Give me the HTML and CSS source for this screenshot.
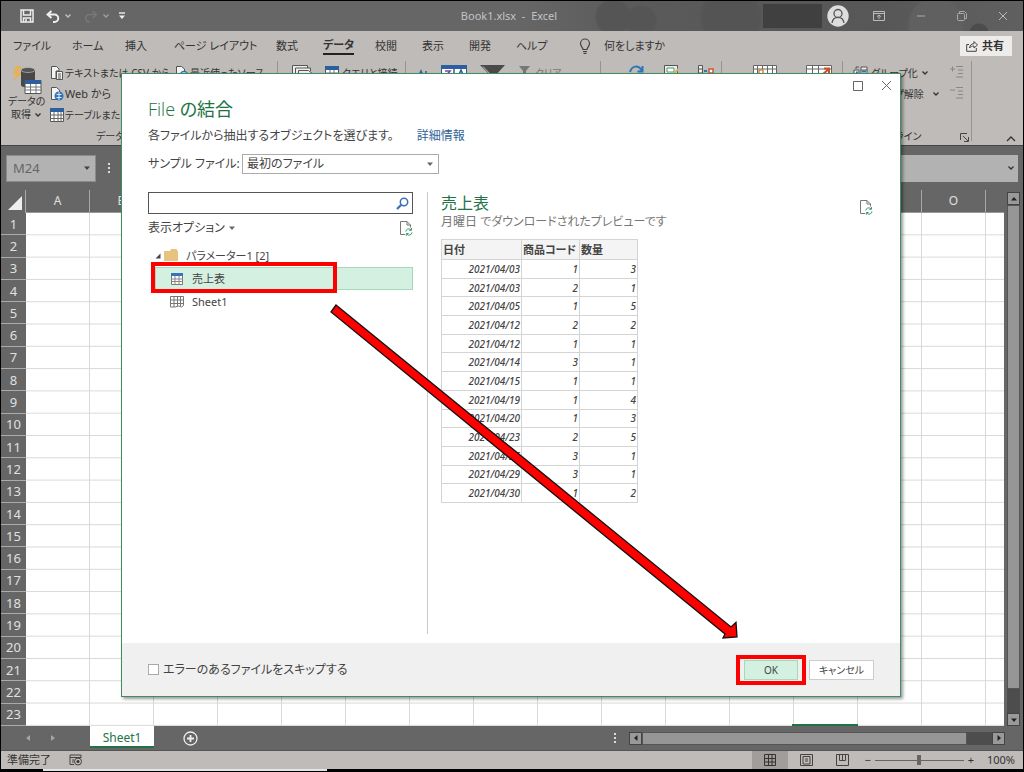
FILE: index.html
```html
<!DOCTYPE html>
<html lang="ja">
<head>
<meta charset="utf-8">
<title>Book1.xlsx - Excel</title>
<link rel="stylesheet" href="styles.css">
</head>
<body>
<svg class="defs" width="0" height="0" aria-hidden="true">
  <symbol id="chev" viewBox="0 0 8 8"><path d="M1.500 2.500 4 5l2.500-2.500" fill="none" stroke="currentColor" stroke-width="1.300"/></symbol>
  <symbol id="tri" viewBox="0 0 8 8"><path d="M1 2.500h6L4 6z" fill="currentColor"/></symbol>
  <symbol id="refresh" viewBox="0 0 14 16"><path d="M6 14.500H1.500v-13H8l3.500 3.500v2.500M8 1.500V5h3.500" fill="none" stroke="#777"/><path d="M6.800 11.500a3 3 0 0 1 5.200-1.700M13 12.300a3 3 0 0 1-5.200 1.900M12.500 8v2.300h-2.300M7.300 15.800v-2.300h2.300" fill="none" stroke="#3f9a70"/></symbol>
</svg>
<div class="app">
  <header class="titlebar">
    <div class="quick">
      <button aria-label="上書き保存"><svg width="14" height="14" viewBox="0 0 14 14"><path d="M1 1h12v12H1zM3.500 1v5h7V1M3.500 13V9h7v4M6 10v3" fill="none" stroke="#eee" stroke-width="1.500"/></svg></button>
      <button aria-label="元に戻す"><svg width="14" height="13" viewBox="0 0 14 13"><path d="M5.500 1 1.500 4.500l4 3.500M2 4.500h6.500a3.700 3.700 0 0 1 0 7.500H7" fill="none" stroke="#eee" stroke-width="2"/></svg></button>
      <svg class="ic8" aria-hidden="true"><use href="#chev"/></svg>
      <button class="off" aria-label="やり直し"><svg width="14" height="13" viewBox="0 0 14 13"><path d="M8.500 1l4 3.500-4 3.500M12 4.500H5.500a3.700 3.700 0 0 0 0 7.500H6" fill="none" stroke="#858585" stroke-width="1.500"/></svg></button>
      <svg class="ic8 off" aria-hidden="true"><use href="#chev"/></svg>
      <button class="custom" aria-label="カスタマイズ"><svg width="8" height="8" viewBox="0 0 8 8"><path d="M1 1h6" stroke="#eee" stroke-width="1.400"/><path d="M1 3.500h6L4 7z" fill="#eee"/></svg></button>
    </div>
    <div class="doc">Book1.xlsx&nbsp; -&nbsp; Excel</div>
    <div class="sys">
      <span class="name"></span>
      <svg class="avatar" width="22" height="22" viewBox="0 0 22 22"><circle cx="11" cy="11" r="10.700" fill="#ddd"/><circle cx="11" cy="8.500" r="4" fill="none" stroke="#555" stroke-width="1.300"/><path d="M5 18c.5-3.700 2.500-5.700 6-5.700s5.500 2 6 5.700" fill="none" stroke="#555" stroke-width="1.300"/></svg>
      <button aria-label="リボン"><svg width="12" height="10" viewBox="0 0 12 10"><path d="M.5.500h11v9H.5zM.5 2.500h11M6 8V4M4 5.700 6 4l2 1.700" fill="none" stroke="#bbb"/></svg></button>
      <button aria-label="最小化"><svg width="10" height="10"><path d="M1 5h8" stroke="#aaa"/></svg></button>
      <button aria-label="元に戻す (縮小)"><svg width="10" height="10" viewBox="0 0 10 10"><rect x=".5" y="2.500" width="7" height="7" rx="1" fill="none" stroke="#aaa"/><path d="M2.500 2.500v-2h5l2 2v5h-2" fill="none" stroke="#aaa"/></svg></button>
      <button aria-label="閉じる"><svg width="10" height="10"><path d="M1 1l8 8M9 1 1 9" stroke="#bbb"/></svg></button>
    </div>
  </header>

  <nav class="tabs">
    <a href="#">ファイル</a><a href="#">ホーム</a><a href="#">挿入</a><a href="#">ページ レイアウト</a><a href="#">数式</a><a href="#" class="current"><span>データ</span></a><a href="#">校閲</a><a href="#">表示</a><a href="#">開発</a><a href="#">ヘルプ</a>
    <a href="#" class="tell"><svg width="12" height="16" viewBox="0 0 12 16"><path d="M4 11.500C4 9.500 1.500 8.500 1.500 5.500a4.500 4.500 0 0 1 9 0c0 3-2.500 4-2.500 6zM4 13.500h4M4.500 15.300h3" fill="none" stroke="#444" stroke-width="1.200"/></svg>何をしますか</a>
    <button class="share"><svg width="12" height="12" viewBox="0 0 12 12"><path d="M3 4.500H.7v6.800h9.600V8M3.500 8c.3-2.800 2-4.300 4.500-4.300V1.500L11.500 5 8 8V6C6 6 4.500 6.500 3.500 8z" fill="none" stroke="#444"/></svg>共有</button>
  </nav>

  <section class="ribbon">
    <div class="group get">
      <button class="big"><svg width="32" height="30" viewBox="0 0 32 30"><path d="M5 1h6L8 7h4L2 17l3-8H1z" fill="#e3b25c"/><path d="M10 5v15c0 1.500 3 2.500 7 2.500s7-1 7-2.500V5z" fill="#484848"/><ellipse cx="17" cy="5" rx="7" ry="2.500" fill="#555" stroke="#bbb" stroke-width=".7"/><path d="M14 15.500h16v13H14z" fill="#fff" stroke="#555"/><path d="M14 15h16v4H14z" fill="#2d5f9e"/><path d="M14 22h16M14 25h16M19.500 19v9M25 19v9" stroke="#777"/></svg><span>データの</span><span>取得 <svg class="ic8"><use href="#chev"/></svg></span></button>
      <div class="stack first">
        <button><svg width="14" height="14" viewBox="0 0 14 14"><path d="M1.500.500h5L9 3v2H6v7.500H1.500zM6.500 5.500h6v8h-6zM8 8h3M8 10h3M8 12h3" fill="#f3f3f3" stroke="#555"/></svg>テキストまたは CSV から</button>
        <button class="web"><svg width="14" height="14" viewBox="0 0 14 14"><path d="M1.500.500h5L9.500 3v9.500h-8z" fill="#f3f3f3" stroke="#555"/><circle cx="9" cy="9" r="4.500" fill="#2f74b9"/><path d="M9 5v8M6.500 7.500h5M6.500 10.500h5" stroke="#dbe8f5"/></svg>Web から</button>
        <button><svg width="14" height="14" viewBox="0 0 14 14"><path d="M.5.500h13v13H.5z" fill="#fff" stroke="#555"/><path d="M0 0h14v4H0z" fill="#2d5f9e"/><path d="M0 7h14M0 10.500h14M4 4v10M8 4v10M11 4v10" stroke="#666"/></svg>テーブルまたは範囲から</button>
      </div>
      <div class="stack"><button><svg width="14" height="14" viewBox="0 0 14 14"><path d="M1.500.500h5L9.500 3v9.500h-8z" fill="#f3f3f3" stroke="#555"/><circle cx="9" cy="9.500" r="4" fill="#eee" stroke="#2f74b9" stroke-width="1.500"/><path d="M9 7v3h2" stroke="#2f74b9" fill="none"/></svg>最近使ったソース</button></div>
      <div class="caption">データの取得と変換</div>
    </div>
    <div class="group query">
      <svg width="24" height="20" viewBox="0 0 24 20"><path d="M.5 12V.500h15V3M3.500 14V3h15v3M6.500 18V5.500h10L22 10v8z" fill="#eee" stroke="#555"/></svg>
      <button><svg width="15" height="14" viewBox="0 0 15 14"><path d="M.5.500h13v12H.5z" fill="#fff" stroke="#555"/><path d="M0 0h14v4H0z" fill="#2d5f9e"/><path d="M0 7h14M5 4v8M9 4v8" stroke="#777"/></svg>クエリと接続</button>
    </div>
    <div class="group sort">
      <svg width="10" height="14" viewBox="0 0 10 14"><path d="M0 13 3 6l3 7M8 6v7" fill="none" stroke="#2f64a0" stroke-width="1.500"/></svg>
      <svg width="26" height="20" viewBox="0 0 26 20"><path d="M.5.500h25v19H.5z" fill="#fff" stroke="#2d5f9e"/><path d="M0 0h26v4H0z" fill="#2d5f9e"/><path d="M13 4v16M17 12l3-7 3 7" fill="none" stroke="#2d5f9e" stroke-width="1.500"/><path d="M4 6h5l-5 6" fill="none" stroke="#8344a6" stroke-width="1.700"/></svg>
      <svg width="26" height="20" viewBox="0 0 26 20"><path d="M0 0h25L15 11v9h-4v-9z" fill="#4a4a4a"/><path d="M3 1.500 12 11v8" fill="none" stroke="#bbb"/></svg>
      <button class="disabled"><svg width="14" height="14" viewBox="0 0 14 14"><path d="M0 0h11L7 5v8H4V5z" fill="#777"/><path d="m8 7 4 4m0-4-4 4" stroke="#777"/></svg>クリア</button>
    </div>
    <div class="group tools">
      <svg width="16" height="14" viewBox="0 0 16 14"><path d="M1 7C3 0 10 0 13 6M13.500 1v5.500H8.500" fill="none" stroke="#2f74b9" stroke-width="2"/></svg>
      <svg width="15" height="14" viewBox="0 0 15 14"><path d="M.5.500h13v12H.5z" fill="#eee" stroke="#555"/><path d="M3 3h7v4H3z" fill="#fff" stroke="#4b9b70"/><path d="m9 10 5-6" stroke="#ddb35b" stroke-width="2"/></svg>
      <svg width="16" height="14" viewBox="0 0 16 14"><path d="M.5.500h4v11h-4zM.5 4h4M.5 8h4" fill="#eee" stroke="#555"/><path d="M6 6h3" stroke="#2f74b9" stroke-width="2"/><path d="M11 4h4v4h-4z" fill="#fff" stroke="#cf5735" stroke-width="1.500"/></svg>
    </div>
    <div class="group forecast">
      <svg width="24" height="20" viewBox="0 0 24 20"><path d="M.5.500h23v19H.5zM0 4h24M0 9h24M4.500 0v20M9.500 0v20M14.500 0v20M19.500 0v20" fill="#fff" stroke="#666"/><path d="M6 5h4v5H6z" fill="#fff" stroke="#e08a3c" stroke-width="1.500"/></svg>
      <svg width="26" height="20" viewBox="0 0 26 20"><path d="M.5.500h25v19H.5zM0 4h26M0 9h26M6.500 0v20M12.500 0v20" fill="#fff" stroke="#666"/><path d="m17 9 6-5M18 3.500h5V9" fill="none" stroke="#cf4c2a" stroke-width="2"/></svg>
    </div>
    <div class="group outline">
      <div class="stack">
        <button><svg width="15" height="14" viewBox="0 0 15 14"><path d="M8 1h6v10H8zM8 4h6M8 8h6M1 4h5v5H1z" fill="#eee" stroke="#555"/><path d="M9 5.500h4M3 6.500h2" stroke="#2f74b9" stroke-width="2"/><path d="M6 1H3v2" fill="none" stroke="#555"/></svg>グループ化 <svg class="ic8"><use href="#chev"/></svg></button>
        <button class="ungroup">グループ解除 <svg class="ic8"><use href="#chev"/></svg></button>
      </div>
      <div class="stack levels">
        <svg width="14" height="14" viewBox="0 0 14 14"><path d="M0 4h5M2.500 1.500v5M6 1.500h7M8 5h5M8 8.500h5M6 12h7" stroke="#888"/></svg>
        <svg width="14" height="14" viewBox="0 0 14 14"><path d="M0 4h5M6 1.500h7M8 5h5M8 8.500h5M6 12h7" stroke="#888"/></svg>
      </div>
      <div class="caption">アウトライン</div>
      <button class="launch" aria-label="アウトラインの設定"><svg width="9" height="9" viewBox="0 0 9 9"><path d="M.5 7V.500H7M3 3l5 5M8.500 4v4.500H4" fill="none" stroke="#444"/></svg></button>
    </div>
    <div class="fold"><button aria-label="リボンを折りたたむ"><svg width="10" height="8"><path d="m1 6 4-4 4 4" fill="none" stroke="#333" stroke-width="1.300"/></svg></button></div>
  </section>

  <section class="formula">
    <button class="namebox"><span>M24</span><svg class="ic8"><use href="#tri"/></svg></button>
    <span class="dots"></span>
    <div class="fx"><input aria-label="数式バー"><svg class="ic8"><use href="#chev"/></svg></div>
  </section>

  <main class="sheet">
    <div class="grid">
      <div class="corner"><svg width="16" height="16"><path d="M15 1v14H1z" fill="#eee"/></svg></div>
      <div class="cols"><span>A</span><span>B</span><span></span><span></span><span></span><span></span><span></span><span></span><span></span><span></span><span></span><span></span><span></span><span></span><span>O</span><span></span></div>
      <div class="rows"><span>1</span><span>2</span><span>3</span><span>4</span><span>5</span><span>6</span><span>7</span><span>8</span><span>9</span><span>10</span><span>11</span><span>12</span><span>13</span><span>14</span><span>15</span><span>16</span><span>17</span><span>18</span><span>19</span><span>20</span><span>21</span><span>22</span><span>23</span></div>
      <div class="cells"><i class="cursor"></i></div>
    </div>
    <div class="vscroll"><button aria-label="上へ"><svg class="ic8 up"><use href="#tri"/></svg></button><div class="thumb"></div><div class="track"></div><button aria-label="下へ"><svg class="ic8"><use href="#tri"/></svg></button></div>
  </main>

  <div class="sheetbar">
    <div class="arrows"><svg width="6" height="8"><path d="M5 1v6L1 4z" fill="#a5a5a5"/></svg><svg width="6" height="8"><path d="M1 1v6l4-3z" fill="#a5a5a5"/></svg></div>
    <button class="sheettab">Sheet1</button>
    <button class="add" aria-label="新しいシート"><svg width="15" height="15" viewBox="0 0 15 15"><circle cx="7.500" cy="7.500" r="6.500" fill="none" stroke="#eee" stroke-width="1.300"/><path d="M7.500 4v7M4 7.500h7" stroke="#eee" stroke-width="1.800"/></svg></button>
    <span class="dots"></span>
    <div class="hscroll"><button aria-label="左へ"><svg class="ic8 left"><use href="#tri"/></svg></button><div class="thumb"></div><div class="track"></div><button aria-label="右へ"><svg class="ic8 right"><use href="#tri"/></svg></button></div>
  </div>

  <footer class="status">
    <span>準備完了</span>
    <svg width="14" height="12" viewBox="0 0 14 12"><path d="M5 10.500H1V1h11v3M1 3.500h11M3 6h2M3 8h2" fill="none" stroke="#444"/><circle cx="9" cy="7.500" r="3.500" fill="none" stroke="#444"/><circle cx="9" cy="7.500" r="1.500" fill="#333"/></svg>
    <div class="views">
      <button class="on" aria-label="標準"><svg width="12" height="12"><path d="M.5.500h11v11H.5zM4.500 0v12M8 0v12M0 4.500h12M0 8h12" fill="none" stroke="#333"/></svg></button>
      <button aria-label="ページ レイアウト"><svg width="13" height="12"><path d="M.5.500h12v11H.5zM3 2.500h7v7.500H3zM5 5h3M5 7h3" fill="none" stroke="#444"/></svg></button>
      <button aria-label="改ページ プレビュー"><svg width="13" height="12"><path d="M.5.500h12v11H.5zM3.500 0v6.500h6V0M6.500 0v6" fill="none" stroke="#444"/></svg></button>
    </div>
    <div class="zoom"><span>−</span><input type="range" aria-label="ズーム" value="50"><span>+</span><b>100%</b></div>
  </footer>
  <div class="edge"><i></i></div>
</div>

<div class="dialog" role="dialog" aria-labelledby="dlg-title">
  <div class="winbtns"><button aria-label="最大化"><svg width="10" height="10"><path d="M.5.500h9v9h-9z" fill="none" stroke="#666"/></svg></button><button aria-label="閉じる"><svg width="11" height="11"><path d="m1 1 9 9M10 1l-9 9" stroke="#666"/></svg></button></div>
  <div class="head">
    <h1 id="dlg-title"><span>File</span> の結合</h1>
    <p>各ファイルから抽出するオブジェクトを選びます。 <a href="#">詳細情報</a></p>
    <div class="sample"><label for="sample">サンプル ファイル:</label><span class="selwrap"><select id="sample"><option>最初のファイル</option></select><svg class="ic8"><use href="#tri"/></svg></span></div>
  </div>
  <div class="body">
    <div class="nav">
      <div class="search"><input type="text" aria-label="検索"><svg width="13" height="13" viewBox="0 0 13 13"><circle cx="8" cy="5" r="3.700" fill="none" stroke="#3a72ba" stroke-width="1.500"/><path d="M5.300 7.700 1 12" stroke="#3a72ba" stroke-width="2.200"/></svg></div>
      <div class="opts"><button>表示オプション <svg class="ic8"><use href="#tri"/></svg></button><button aria-label="更新"><svg width="14" height="16"><use href="#refresh"/></svg></button></div>
      <ul class="tree">
        <li class="root"><svg width="6" height="6"><path d="M5.500.500v5h-5z" fill="#444"/></svg><svg width="14" height="13" viewBox="0 0 14 13"><path d="M0 2h6l1-2h6v2h1v10H0z" fill="#e8c27f"/></svg>パラメーター1 [2]</li>
        <li class="sel"><svg width="13" height="12" viewBox="0 0 13 12"><path d="M.5.500h11v11H.5z" fill="#fff" stroke="#777"/><path d="M0 0h12v3H0z" fill="#3a72ba"/><path d="M0 6h12M0 8.500h12M4 3v9M8 3v9" stroke="#888"/></svg>売上表</li>
        <li><svg width="14" height="12" viewBox="0 0 14 12"><path d="M.5.500h13v9l-2 1.500-3-1-3 1H.5zM.5 4h13M.5 7.500h13M4 .500V11M7.500.500V10M10.500.500V10" fill="none" stroke="#777"/></svg>Sheet1</li>
      </ul>
    </div>
    <div class="preview">
      <div class="phead"><div><h2>売上表</h2><p>月曜日 でダウンロードされたプレビューです</p></div><button aria-label="プレビューの更新"><svg width="14" height="16"><use href="#refresh"/></svg></button></div>
      <table>
        <thead><tr><th class="date">日付</th><th>商品コード</th><th>数量</th></tr></thead>
        <tbody>
          <tr><td>2021/04/03</td><td>1</td><td>3</td></tr>
          <tr><td>2021/04/03</td><td>2</td><td>1</td></tr>
          <tr><td>2021/04/05</td><td>1</td><td>5</td></tr>
          <tr><td>2021/04/12</td><td>2</td><td>2</td></tr>
          <tr><td>2021/04/12</td><td>1</td><td>1</td></tr>
          <tr><td>2021/04/14</td><td>3</td><td>1</td></tr>
          <tr><td>2021/04/15</td><td>1</td><td>1</td></tr>
          <tr><td>2021/04/19</td><td>1</td><td>4</td></tr>
          <tr><td>2021/04/20</td><td>1</td><td>3</td></tr>
          <tr><td>2021/04/23</td><td>2</td><td>5</td></tr>
          <tr><td>2021/04/26</td><td>3</td><td>1</td></tr>
          <tr><td>2021/04/29</td><td>3</td><td>1</td></tr>
          <tr><td>2021/04/30</td><td>1</td><td>2</td></tr>
        </tbody>
      </table>
    </div>
  </div>
  <div class="foot">
    <label><input type="checkbox">エラーのあるファイルをスキップする</label>
    <div class="actions"><span class="mark"><button class="ok">OK</button></span><button class="cancel">キャンセル</button></div>
  </div>
  <svg class="arrow" viewBox="0 0 410 338" aria-hidden="true"><path d="M6 1 401 323l5-4.500 1 14.500-14 1 2-4L1 8z" fill="#f00" stroke="#111" stroke-width="1.300"/></svg>
</div>
</body>
</html>
```
FILE: styles.css
```css
* { box-sizing: border-box; }
body {
  margin: 0;
  font: 12px/16px "Noto Sans", "Noto Sans CJK JP", sans-serif;
  font-feature-settings: "palt";
  color: #333;
  background: #000;
}
button, input, select { font: inherit; font-feature-settings: inherit; color: inherit; margin: 0; }
button { display: inline-flex; align-items: center; padding: 0; border: 0; background: none; }
a { color: inherit; text-decoration: none; }
svg { display: block; flex: none; }
.defs { position: absolute; }
.ic8 { width: 8px; height: 8px; }
.up { transform: rotate(180deg); }
.left { transform: rotate(90deg); }
.right { transform: rotate(-90deg); }

.app { display: flex; flex-direction: column; height: 100vh; padding: 1px 1px 0; overflow: hidden; }

.titlebar {
  display: grid;
  grid-template-columns: 1fr auto 1fr;
  align-items: center;
  flex: 0 0 30px;
  color: #c4c4c4;
  background:
    radial-gradient(circle at 612px 16px, #555 16px, transparent 19px),
    radial-gradient(circle at 640px 20px, #555 14px, transparent 17px),
    radial-gradient(circle at 730px 16px, #545454 28px, transparent 32px),
    radial-gradient(circle at 935px 24px, #606060 26px, transparent 29px),
    radial-gradient(circle at 978px 32px, #4c4c4c 9px, transparent 10px),
    linear-gradient(90deg, #666 520px, #5a5a5a 640px, #575757 880px, #606060);
}
.quick { display: flex; align-items: center; padding-left: 19px; gap: 4px; }
.quick button + .ic8 { margin-right: 8px; }
.quick button:first-child { margin-right: 8px; }
.quick .off + .ic8 { margin-right: 0; }
.off { opacity: .6; }
.custom { margin-left: 4px; }
.doc { padding-right: 6px; font-size: 11px; }
.sys { display: flex; justify-content: flex-end; align-items: center; gap: 31px; padding-right: 15px; }
.name { width: 59px; height: 24px; background: #404040; }
.avatar { margin-left: -26px; margin-right: -7px; }

.tabs {
  display: grid;
  grid-template-columns: 59px 53px 49px 102px 47px 52px 47px 47px 47px 63px 1fr auto;
  align-items: center;
  flex: 0 0 29px;
  padding: 0 11px 0 12px;
  background: #bfbbb8;
  font-size: 11px;
  white-space: nowrap;
}
.current { font-weight: 700; }
.current span { display: inline-block; border-bottom: 2px solid #222; }
.tell { display: flex; align-items: center; gap: 13px; }
.share { gap: 4px; height: 20px; padding: 0 8px 0 6px; background: #eeecea; font-weight: 700; }

.ribbon {
  display: grid;
  grid-template-columns: 277px 128px 195px 121px 121px 129px 1fr;
  flex: 0 0 86px;
  background: #bfbbb8;
  border-bottom: 1px solid #444;
  font-size: 10px;
  white-space: nowrap;
}
.group { position: relative; display: flex; align-items: flex-start; padding-top: 5px; overflow: hidden; }
.group::after { content: ""; position: absolute; right: 0; top: 1px; bottom: 4px; width: 1px; background: #969391; }
.stack { display: flex; flex-direction: column; gap: 5px; }
.stack button { gap: 1px; height: 16px; }
.stack .web { font-size: 11px; }
.first { width: 125px; }
.caption { position: absolute; left: 95px; bottom: 1px; }
.get { padding-left: 7px; gap: 4px; }
.get .stack { padding-left: 1px; }
.big { flex-direction: column; width: 37px; line-height: 13px; }
.big span { display: flex; gap: 3px; align-items: center; }
.first + .stack { margin-left: -4px; }
.query { padding-left: 14px; gap: 9px; }
.query button, .sort button { gap: 2px; }
.sort { padding-left: 12px; gap: 13px; }
.disabled { color: #777; }
.tools { padding-left: 28px; gap: 19px; }
.forecast { padding-left: 31px; gap: 29px; }
.outline { padding-left: 10px; justify-content: space-between; padding-right: 8px; }
.outline .stack button { gap: 3px; }
.outline .stack .ungroup { padding-left: 14px; gap: 8px; }
.levels { gap: 7px; }
.outline .caption { left: 26px; }
.launch { position: absolute; right: 3px; bottom: 3px; }
.fold { display: flex; align-items: flex-end; justify-content: flex-end; padding: 0 7px 2px 0; }

.formula { display: flex; align-items: center; flex: 0 0 44px; padding: 0 5px; gap: 12px; background: #666; }
.namebox { justify-content: space-between; width: 90px; height: 27px; padding: 0 4px 0 6px; background: #b2b2b2; border: 1px solid #8b8b8b; color: #666; font-size: 13px; }
.namebox .ic8 { color: #444; }
.dots { width: 2px; height: 10px; background: repeating-linear-gradient(#ddd 0 2px, transparent 2px 4px); }
.fx { display: flex; align-items: center; flex: 1; height: 27px; padding-right: 3px; background: #b2b2b2; }
.fx input { flex: 1; border: 0; background: none; }

.sheet { display: flex; flex: 1; min-height: 0; background: #666; gap: 3px; padding-right: 3px; }
.grid { display: grid; grid-template: 23px 1fr / 25px 1fr; flex: 1; min-width: 0; color: #e0e0e0; }
.corner { display: flex; justify-content: flex-end; align-items: flex-end; padding: 0 2px 2px; border-right: 1px solid #aaa; }
.cols { display: flex; overflow: hidden; border-bottom: 1px solid #999; }
.cols span { flex: 0 0 64px; text-align: center; line-height: 22px; border-right: 1px solid #a8a8a8; }
.rows { display: flex; flex-direction: column; text-align: center; font-size: 13px; }
.rows span { flex: 1; display: flex; align-items: center; justify-content: center; border-bottom: 1px solid #aaa; min-height: 0; }
.cells {
  position: relative;
  background-color: #fff;
  background-image: linear-gradient(to left, #d8d8d8 1px, transparent 1px), linear-gradient(to top, #d8d8d8 1px, transparent 1px);
  background-size: 64px calc(100% / 23);
}
.cursor { position: absolute; left: 766px; bottom: 0; width: 66px; height: 2px; background: #217346; }
.vscroll { display: flex; flex-direction: column; width: 13px; margin-top: 2px; }
.vscroll button, .hscroll button { justify-content: center; flex: 0 0 13px; height: 13px; background: #999; border: 1px solid #444; color: #222; }
.thumb { flex: 1; background: #969696; border: 1px solid #555; }
.track { background: #4d4d4d; }
.vscroll .track { height: 24px; }

.sheetbar { display: flex; flex: 0 0 25px; background: #666; border-bottom: 1px solid #555; }
.arrows { display: flex; align-items: center; width: 89px; padding-left: 24px; gap: 19px; }
.sheettab { justify-content: center; width: 64px; height: 22px; padding-top: 3px; background: #fff; color: #217346; border-bottom: 2px solid #217346; }
.add { margin-left: 29px; }
.sheetbar .dots { margin: 7px 13px 0 auto; }
.hscroll { display: flex; align-items: center; width: 376px; margin-right: 18px; }
.hscroll > * { height: 13px; }
.hscroll .track { width: 25px; }

.status { display: flex; align-items: center; flex: 0 0 18px; padding: 0 8px 0 6px; gap: 18px; background: #bfbbb8; font-size: 11px; }
.views { display: flex; margin-left: auto; height: 100%; }
.views button { width: 36px; justify-content: center; }
.views .on { background: #a09d9b; }
.zoom { display: flex; align-items: center; gap: 4px; margin-left: -14px; }
.zoom b { font-weight: 400; margin-left: 9px; }
.zoom input { appearance: none; width: 89px; height: 10px; background: linear-gradient(#666, #666) center / 100% 1px no-repeat; }
.zoom input::-webkit-slider-thumb { appearance: none; width: 4px; height: 10px; background: #666; }
.edge { flex: 0 0 3px; background: #000; }
.edge i { display: block; margin-left: 42px; width: 284px; height: 2px; background: #e4e4e4; }

.dialog {
  position: absolute;
  inset: 73px 123px 75px 121px;
  display: flex;
  flex-direction: column;
  background: #fff;
  border: 1px solid #3f8c65;
  box-shadow: 2px 2px 3px rgba(0, 0, 0, .4);
  color: #444;
}
.winbtns { position: absolute; right: 8px; top: 6px; display: flex; gap: 18px; }
.head { padding: 24px 26px 0; }
h1, h2 { margin: 0; font-weight: 400; color: #217346; }
h1 { font-size: 18px; line-height: 22px; }
h1 span { font-family: "Open Sans", sans-serif; font-weight: 300; }
p { margin: 0; }
.head p { margin-top: 8px; }
.head a { margin-left: 20px; color: #2f6399; }
.sample { display: flex; align-items: center; gap: 4px; margin-top: 10px; }
.sample label { width: 90px; white-space: nowrap; }
.selwrap { position: relative; }
.selwrap select { appearance: none; display: block; width: 197px; height: 20px; padding: 0 4px; border: 1px solid #ababab; border-radius: 0; background: #fff; }
.selwrap .ic8 { position: absolute; right: 5px; top: 6px; color: #666; }
.body { display: flex; flex: 1; padding: 18px 26px 9px; }
.nav { flex: 0 0 280px; padding-right: 14px; border-right: 1px solid #ccc; }
.search { display: flex; align-items: center; height: 22px; padding-right: 3px; border: 1px solid #555; }
.search input { flex: 1; min-width: 0; border: 0; background: none; }
.opts { display: flex; align-items: center; justify-content: space-between; height: 28px; }
.opts button { gap: 3px; }
.opts .ic8 { color: #666; }
.tree { list-style: none; margin: 2px 0 0; padding: 0 0 0 7px; font-size: 11px; }
.tree li { position: relative; display: flex; align-items: center; height: 23px; gap: 8px; padding-left: 15px; }
.tree .root { gap: 3px; padding-left: 0; }
.tree .root svg + svg { margin-right: 5px; }
.tree .sel { background: #d3f0e0; border: 1px solid #a5d8bd; }
.tree .sel::after { content: ""; position: absolute; inset: -6px 75px -4px -5px; border: 4px solid #f00; }
.preview { flex: 1; padding-left: 13px; }
.phead { display: flex; justify-content: space-between; }
.phead button { align-self: flex-start; margin: 7px 1px 0; }
.phead p { color: #777; }
h2 { font-size: 16px; line-height: 22px; }
table { width: 197px; height: 264px; margin-top: 9px; border-collapse: collapse; table-layout: fixed; font-size: 10px; line-height: 12px; }
th, td { border: 1px solid #d4d4d4; padding: 0 1px; }
th { height: 20px; background: #f4f4f4; text-align: left; font-size: 11px; white-space: nowrap; }
.date { width: 80px; }
td { text-align: right; font-style: italic; font-weight: 500; color: #444; }
.foot { display: flex; align-items: center; justify-content: space-between; flex: 0 0 53px; padding: 0 26px; background: #f0f0f0; }
.foot label { display: flex; align-items: center; gap: 4px; }
.foot input { appearance: none; width: 11px; height: 11px; border: 1px solid #aaa; background: #fff; }
.actions { display: flex; align-items: center; gap: 3px; padding-top: 1px; font-size: 10px; }
.mark { display: flex; border: 4px solid #f00; padding: 1px 4px; }
.actions button { justify-content: center; height: 20px; border: 1px solid #ccc; background: #fff; }
.actions .ok { width: 54px; background: #d3f0e0; border-color: #a5d8bd; }
.cancel { width: 65px; }
.arrow { position: absolute; left: 208px; top: 230px; width: 410px; height: 338px; }
```
